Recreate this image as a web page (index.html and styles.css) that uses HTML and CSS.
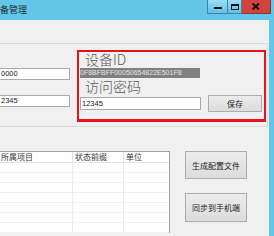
FILE: index.html
```html
<!DOCTYPE html>
<html lang="zh">
<head>
<meta charset="utf-8">
<title>设备管理</title>
<link rel="stylesheet" href="styles.css">
</head>
<body>
<div class="window">
  <div class="titlebar">
    <span class="title">备管理</span>
    <div class="controls">
      <div class="ctl min"><i class="min-bar"></i></div>
      <div class="ctl max"><i class="max-box"></i></div>
      <div class="ctl close">
        <svg width="10" height="9" viewBox="0 0 10 9"><path d="M1.5 1.5 L8 7.5 M8 1.5 L1.5 7.5" stroke="#1a1010" stroke-width="2"/></svg>
      </div>
    </div>
  </div>
  <div class="client">
    <div class="group">
      <div class="left-col">
        <div class="field">0000</div>
        <div class="field">2345</div>
      </div>
      <div class="redbox">
        <div class="big-label">设备ID</div>
        <div class="idbar">0F8BFBFF00050654822E501F8</div>
        <div class="big-label second">访问密码</div>
        <div class="pw-row">
          <div class="field pw">12345</div>
          <div class="btn save">保存</div>
        </div>
      </div>
    </div>
    <div class="lower">
      <div class="table">
        <div class="cell head">所属项目</div>
        <div class="cell head">状态前缀</div>
        <div class="cell head">单位</div>
        <div class="cell"></div><div class="cell"></div><div class="cell"></div>
        <div class="cell"></div><div class="cell"></div><div class="cell"></div>
        <div class="cell"></div><div class="cell"></div><div class="cell"></div>
        <div class="cell"></div><div class="cell"></div><div class="cell"></div>
        <div class="cell"></div><div class="cell"></div><div class="cell"></div>
        <div class="cell"></div><div class="cell"></div><div class="cell"></div>
        <div class="cell"></div><div class="cell"></div><div class="cell"></div>
      </div>
      <div class="side-buttons">
        <div class="btn big">生成配置文件</div>
        <div class="btn big second-btn">同步到手机端</div>
      </div>
    </div>
  </div>
</div>
</body>
</html>
```

FILE: styles.css
```css
html, body {
  margin: 0;
  padding: 0;
}
body {
  width: 274px;
  height: 236px;
  overflow: hidden;
  background: #63c6e9;
  font-family: "Noto Sans CJK SC", "Liberation Sans", sans-serif;
}
.window {
  display: flex;
  flex-direction: column;
  width: 274px;
  height: 236px;
}
.titlebar {
  height: 20px;
  flex: none;
  display: flex;
  align-items: flex-start;
}
.title {
  flex: 1;
  font-size: 9px;
  line-height: 10px;
  color: #1c2a33;
  padding-top: 5px;
}
.controls {
  display: grid;
  grid-template-columns: 20px 15px 29px;
  width: 64px;
  height: 14px;
  margin-right: 3px;
}
.ctl {
  box-sizing: border-box;
  display: flex;
  align-items: center;
  justify-content: center;
}
.min, .max {
  background-color: #7fd0ee;
  background-image: linear-gradient(#9cdcf3, #5fc1e5);
  border: 1px solid #3d84aa;
  border-top: none;
}
.min {
  border-right: none;
}
.min-bar {
  display: block;
  width: 8px;
  height: 2px;
  background: #141414;
  margin-top: 3px;
}
.max-box {
  display: block;
  width: 8px;
  height: 6px;
  box-sizing: border-box;
  border: 1px solid #141414;
  border-top-width: 2px;
}
.close {
  background-color: #d0443c;
  border: 1px solid #8c3330;
  border-top: none;
  border-left: none;
}
.close svg {
  display: block;
}
.client {
  flex: none;
  width: 269px;
  height: 216px;
  background: #f0f0f0;
}
.group {
  margin-top: 23px;
  width: 268px;
  height: 84px;
  box-sizing: border-box;
  border-top: 1px solid #dcdcdc;
  border-right: 1px solid #dcdcdc;
  border-bottom: 1px solid #dcdcdc;
  display: flex;
  align-items: flex-start;
}
.left-col {
  width: 70px;
  padding-top: 24px;
  display: flex;
  flex-direction: column;
  gap: 15px;
}
.field {
  height: 12px;
  box-sizing: border-box;
  background: #fff;
  border: 1px solid #a9a9a9;
  font-family: "Liberation Sans", sans-serif;
  font-size: 7.5px;
  line-height: 10px;
  color: #222;
  padding-left: 1px;
}
.left-col .field {
  border-left: none;
}
.redbox {
  margin-left: 7px;
  margin-top: 6px;
  width: 189px;
  height: 72px;
  box-sizing: border-box;
  border: 2px solid #e8121b;
  border-bottom-width: 3px;
}
.big-label {
  font-size: 14px;
  line-height: 15px;
  height: 15px;
  color: #5a5a5a;
  font-weight: 300;
  margin-left: 6px;
}
.big-label.second {
  margin-top: 1px;
}
.idbar {
  margin-top: 1px;
  margin-left: 1px;
  width: 120px;
  height: 10px;
  background: #808080;
  color: #e6e6e6;
  font-family: "Liberation Sans", sans-serif;
  font-size: 7px;
  line-height: 10px;
  overflow: hidden;
  white-space: nowrap;
}
.pw-row {
  display: flex;
  align-items: flex-start;
  margin-top: 1px;
  margin-left: 1px;
}
.field.pw {
  width: 121px;
  height: 13px;
  margin-top: 2px;
  line-height: 11px;
}
.btn {
  box-sizing: border-box;
  background: linear-gradient(#ececec, #dcdcdc);
  border: 1px solid #acacac;
  color: #222;
  font-size: 8px;
  display: flex;
  align-items: center;
  justify-content: center;
}
.save {
  margin-left: 7px;
  width: 54px;
  height: 17px;
}
.lower {
  margin-top: 24px;
  display: flex;
  align-items: flex-start;
}
.table {
  width: 170px;
  box-sizing: border-box;
  background: #fff;
  border-top: 1px solid #a0a0a0;
  border-right: 1px solid #a0a0a0;
  display: grid;
  grid-template-columns: 73px 51px 45px;
  grid-template-rows: 11px;
  grid-auto-rows: 10px;
}
.cell {
  box-sizing: border-box;
  border-right: 1px solid #ececec;
  border-bottom: 1px solid #f0f0f0;
}
.cell:nth-child(3n) {
  border-right: none;
}
.cell.head {
  height: 11px;
  font-size: 8px;
  line-height: 10px;
  color: #333;
  border-right-color: #e0e0e0;
  border-bottom-color: #e3e3e3;
  padding-left: 2px;
}
.table .head:first-child {
  padding-left: 1px;
}
.side-buttons {
  margin-left: 15px;
  display: flex;
  flex-direction: column;
  gap: 14px;
}
.btn.big {
  width: 62px;
  height: 28px;
}
.btn.second-btn {
  height: 29px;
}
```
